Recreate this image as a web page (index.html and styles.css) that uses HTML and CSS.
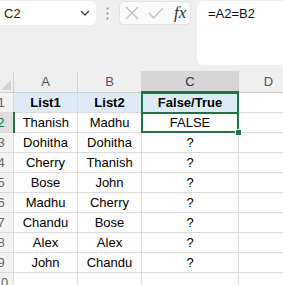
FILE: index.html
```html
<!DOCTYPE html>
<html lang="en">
<head>
  <meta charset="UTF-8" />
  <title>Compare Lists</title>
  <link rel="stylesheet" href="styles.css">
</head>
<body>
  <div class="formula-bar">
    <div class="name-box">
      <span>C2</span>
      <svg width="10" height="6" viewBox="0 0 10 6"><path d="M1 1 L5 5 L9 1" fill="none" stroke="#444" stroke-width="1.3"/></svg>
    </div>
    <div class="dots">
      <svg width="3" height="13" viewBox="0 0 3 13"><circle cx="1.5" cy="1.5" r="1" fill="#888"/><circle cx="1.5" cy="6.5" r="1" fill="#888"/><circle cx="1.5" cy="11.5" r="1" fill="#888"/></svg>
    </div>
    <div class="fx-box">
      <svg width="14" height="14" viewBox="0 0 14 14"><path d="M1 1 L13 13 M13 1 L1 13" stroke="#bdbdbd" stroke-width="1.2"/></svg>
      <svg width="16" height="12" viewBox="0 0 16 12"><path d="M1 6 L5.5 11 L15 1" fill="none" stroke="#bdbdbd" stroke-width="1.2"/></svg>
      <span class="fx">fx</span>
    </div>
    <div class="formula-input">=A2=B2</div>
  </div>

  <table class="sheet">
    <colgroup>
      <col class="w-row">
      <col class="w-a">
      <col class="w-b">
      <col class="w-c">
      <col class="w-d">
    </colgroup>
    <tr class="col-heads">
      <th class="corner"></th>
      <th>A</th>
      <th>B</th>
      <th class="sel-col">C</th>
      <th>D</th>
    </tr>
    <tr>
      <th class="row-head">1</th>
      <td class="data title">List1</td>
      <td class="data title">List2</td>
      <td class="data title sel-top">False/True</td>
      <td></td>
    </tr>
    <tr>
      <th class="row-head sel-row">2</th>
      <td class="data">Thanish</td>
      <td class="data">Madhu</td>
      <td class="data active">FALSE</td>
      <td></td>
    </tr>
    <tr>
      <th class="row-head">3</th>
      <td class="data">Dohitha</td>
      <td class="data">Dohitha</td>
      <td class="data">?</td>
      <td></td>
    </tr>
    <tr>
      <th class="row-head">4</th>
      <td class="data">Cherry</td>
      <td class="data">Thanish</td>
      <td class="data">?</td>
      <td></td>
    </tr>
    <tr>
      <th class="row-head">5</th>
      <td class="data">Bose</td>
      <td class="data">John</td>
      <td class="data">?</td>
      <td></td>
    </tr>
    <tr>
      <th class="row-head">6</th>
      <td class="data">Madhu</td>
      <td class="data">Cherry</td>
      <td class="data">?</td>
      <td></td>
    </tr>
    <tr>
      <th class="row-head">7</th>
      <td class="data">Chandu</td>
      <td class="data">Bose</td>
      <td class="data">?</td>
      <td></td>
    </tr>
    <tr>
      <th class="row-head">8</th>
      <td class="data">Alex</td>
      <td class="data">Alex</td>
      <td class="data">?</td>
      <td></td>
    </tr>
    <tr>
      <th class="row-head">9</th>
      <td class="data">John</td>
      <td class="data">Chandu</td>
      <td class="data">?</td>
      <td></td>
    </tr>
    <tr>
      <th class="row-head">10</th>
      <td></td>
      <td></td>
      <td></td>
      <td></td>
    </tr>
  </table>
</body>
</html>
```

FILE: styles.css
```css
body {
  margin: 0;
  padding: 0;
  background-color: #ffffff;
  font-family: 'Liberation Sans', Arial, sans-serif;
  color: #000;
  overflow: hidden;
}

.formula-bar {
  display: flex;
  align-items: flex-start;
  height: 71px;
  padding-top: 1px;
  box-sizing: border-box;
  background-color: #efefef;
}

.name-box {
  display: flex;
  align-items: center;
  justify-content: space-between;
  width: 96px;
  height: 24px;
  padding: 0 6px 0 4px;
  box-sizing: border-box;
  background-color: #fff;
  border-radius: 0 5px 5px 0;
  font-size: 13px;
  color: #222;
}

.dots {
  display: flex;
  align-items: center;
  justify-content: center;
  width: 23px;
  height: 24px;
}

.fx-box {
  display: flex;
  align-items: center;
  gap: 9px;
  width: 72px;
  height: 24px;
  padding-left: 5px;
  box-sizing: border-box;
  background-color: #fafafa;
  border: 1px solid #e3e3e3;
  border-radius: 5px;
}

.fx {
  font-family: 'Liberation Serif', 'Times New Roman', serif;
  font-style: italic;
  font-size: 17px;
  color: #333;
  margin-left: 1px;
}

.formula-input {
  flex: 1;
  height: 64px;
  margin-left: 6px;
  padding: 5px 0 0 11px;
  box-sizing: border-box;
  background-color: #fff;
  border-radius: 6px 0 0 6px;
  font-size: 13px;
  color: #111;
}

.sheet {
  border-collapse: collapse;
  table-layout: fixed;
  width: 310px;
  margin-left: -12px;
  font-size: 13px;
}

.w-row { width: 25px; }
.w-a { width: 64px; }
.w-b { width: 64px; }
.w-c { width: 97px; }
.w-d { width: 60px; }

.sheet tr {
  height: 20px;
}

.sheet tr.col-heads {
  height: 21px;
}

.sheet th,
.sheet td {
  padding: 0;
  border: 1px solid #dadada;
  text-align: center;
  white-space: nowrap;
  overflow: hidden;
}

.col-heads th {
  background-color: #efefef;
  color: #555;
  font-weight: normal;
  border-color: #d0d0d0;
  border-top: none;
}

.col-heads th.sel-col {
  background-color: #d6d6d6;
  color: #333;
  border-bottom: 2px solid #217346;
}

.corner {
  position: relative;
}

.corner::after {
  content: "";
  position: absolute;
  right: 2px;
  bottom: 2px;
  border-left: 10px solid transparent;
  border-bottom: 10px solid #d2d2d2;
}

.row-head {
  background-color: #f3f3f3;
  color: #666;
  font-weight: normal;
  border-color: #d0d0d0;
}

.row-head.sel-row {
  background-color: #dedede;
  color: #217346;
  border-right: 2px solid #217346;
}

.data {
  border: 2px solid #111;
}

.title {
  background-color: #ddebf7;
  font-weight: bold;
}

.sheet td.sel-top,
.sheet td.active {
  position: relative;
  overflow: visible;
}

.sel-top::after {
  content: "";
  position: absolute;
  left: -1px;
  right: -1px;
  top: -1px;
  bottom: 0;
  border: 2px solid #217346;
  border-bottom: none;
}

.active::after {
  content: "";
  position: absolute;
  left: -1px;
  right: -1px;
  top: -1px;
  bottom: -1px;
  border: 2px solid #217346;
}

.active::before {
  content: "";
  position: absolute;
  right: -4px;
  bottom: -4px;
  width: 5px;
  height: 5px;
  background-color: #217346;
  border: 1px solid #fff;
  z-index: 2;
}
```
